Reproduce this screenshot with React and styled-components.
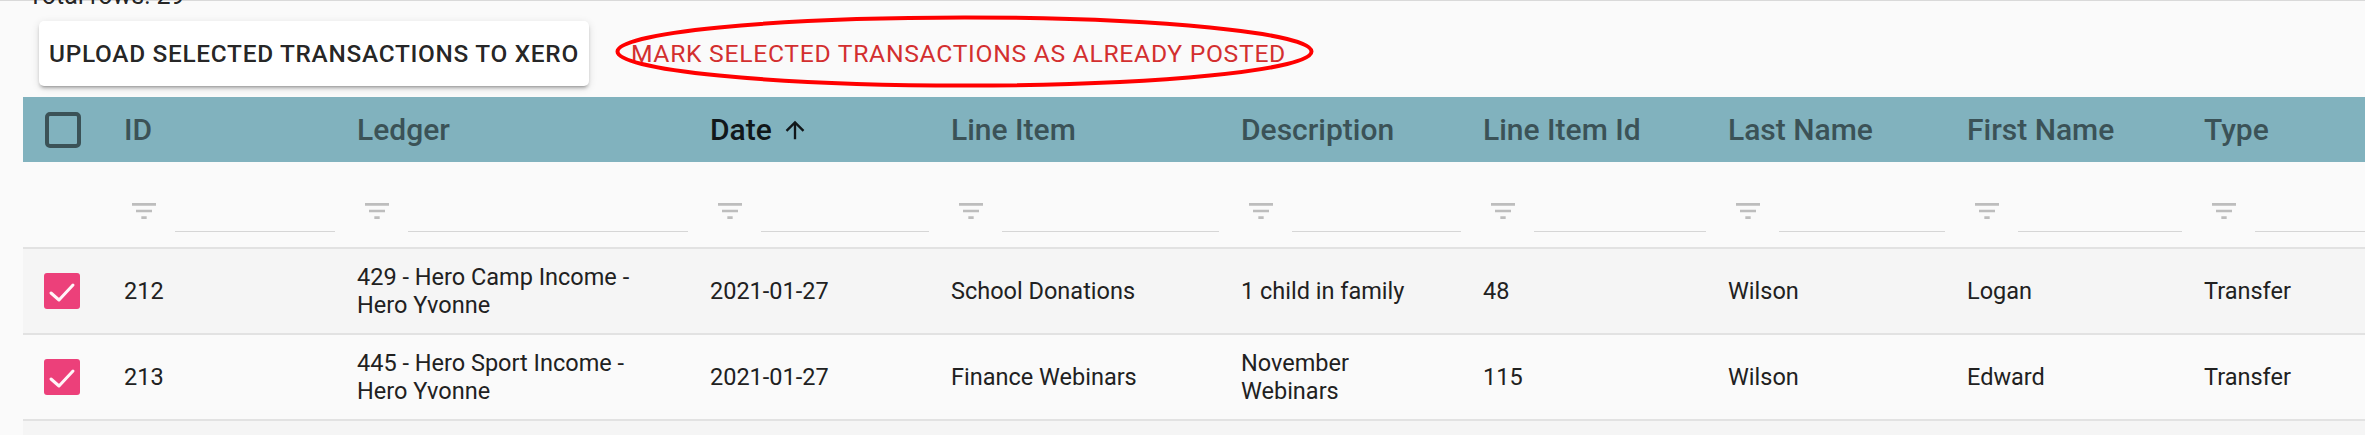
import React from "react";
import styled, { createGlobalStyle } from "styled-components";

const GlobalStyle = createGlobalStyle`
  html, body {
    margin: 0;
    padding: 0;
    overflow: hidden;
    background: #fafafa;
    font-family: Roboto, "Liberation Sans", sans-serif;
  }
`;

const columns = [
  { key: "id", title: "ID", width: 233 },
  { key: "ledger", title: "Ledger", width: 353 },
  { key: "date", title: "Date", width: 241, sorted: true },
  { key: "lineItem", title: "Line Item", width: 290 },
  { key: "description", title: "Description", width: 242 },
  { key: "lineItemId", title: "Line Item Id", width: 245 },
  { key: "lastName", title: "Last Name", width: 239 },
  { key: "firstName", title: "First Name", width: 237 },
  { key: "type", title: "Type", width: 260 },
];

const gridTemplate = `90px ${columns.map((c) => `${c.width}px`).join(" ")}`;

const rows = [
  {
    id: 212,
    ledger: "429 - Hero Camp Income - Hero Yvonne",
    date: "2021-01-27",
    lineItem: "School Donations",
    description: "1 child in family",
    lineItemId: 48,
    lastName: "Wilson",
    firstName: "Logan",
    type: "Transfer",
    selected: true,
  },
  {
    id: 213,
    ledger: "445 - Hero Sport Income - Hero Yvonne",
    date: "2021-01-27",
    lineItem: "Finance Webinars",
    description: "November Webinars",
    lineItemId: 115,
    lastName: "Wilson",
    firstName: "Edward",
    type: "Transfer",
    selected: true,
  },
];

function FilterIcon() {
  return (
    <FilterSvg viewBox="0 0 24 24">
      <path d="M10 18h4v-2h-4v2zM3 6v2h18V6H3zm3 7h12v-2H6v2z" />
    </FilterSvg>
  );
}

function SortArrow() {
  return (
    <ArrowSvg viewBox="0 0 24 24">
      <path d="M4 12l1.41 1.41L11 7.83V20h2V7.83l5.58 5.59L20 12l-8-8-8 8z" />
    </ArrowSvg>
  );
}

function Checkbox({ checked }) {
  if (checked) {
    return (
      <CheckSvg viewBox="0 0 36 36">
        <rect x="0" y="0" width="36" height="36" rx="3" fill="#ec407a" />
        <polyline
          points="7,20 15,27 29,12"
          fill="none"
          stroke="#fff5f8"
          strokeWidth="3"
          strokeLinecap="round"
          strokeLinejoin="round"
        />
      </CheckSvg>
    );
  }
  return (
    <CheckSvg viewBox="0 0 36 36">
      <rect x="2" y="2" width="32" height="32" rx="3" fill="none" stroke="#3b5257" strokeWidth="4" />
    </CheckSvg>
  );
}

function App() {
  return (
    <Page>
      <GlobalStyle />
      <TotalRows>Total rows: 29</TotalRows>
      <Toolbar>
        <UploadButton>Upload selected transactions to Xero</UploadButton>
        <MarkButton>
          Mark selected transactions as already posted
          <Circle viewBox="0 0 701 73">
            <ellipse cx="350.5" cy="36.5" rx="347" ry="34" fill="none" stroke="#ff0000" strokeWidth="4" />
          </Circle>
        </MarkButton>
      </Toolbar>

      <Table>
        <HeaderRow>
          <CheckCell $offset={22}>
            <Checkbox />
          </CheckCell>
          {columns.map((c) => (
            <HeaderCell key={c.key} $sorted={c.sorted}>
              {c.title}
              {c.sorted && <SortArrow />}
            </HeaderCell>
          ))}
        </HeaderRow>

        <FilterRow>
          <div />
          {columns.map((c) => (
            <FilterCell key={c.key}>
              <FilterIcon />
              <FilterInput />
            </FilterCell>
          ))}
        </FilterRow>

        {rows.map((r, i) => (
          <DataRow key={r.id} $striped={i % 2 === 0}>
            <CheckCell $offset={21}>
              <Checkbox checked={r.selected} />
            </CheckCell>
            {columns.map((c) => (
              <DataCell key={c.key}>{r[c.key]}</DataCell>
            ))}
          </DataRow>
        ))}
        <EmptyRow />
      </Table>
    </Page>
  );
}

const Page = styled.div`
  border-top: 1px solid #d9d9d9;
  min-height: 100vh;
  box-sizing: border-box;
`;

const TotalRows = styled.div`
  margin: -20px 0 0 28px;
  font-size: 25px;
  line-height: 29px;
  color: rgba(0, 0, 0, 0.87);
`;

const Toolbar = styled.div`
  display: flex;
  align-items: center;
  gap: 32px;
  margin-top: 11px;
  padding-left: 39px;
`;

const BaseButton = styled.div`
  position: relative;
  display: flex;
  align-items: center;
  height: 65px;
  padding: 0 10px;
  box-sizing: border-box;
  font-size: 24.4px;
  font-weight: 500;
  letter-spacing: 0.7px;
  text-transform: uppercase;
  white-space: nowrap;
  border-radius: 5px;
`;

const UploadButton = styled(BaseButton)`
  background: #ffffff;
  color: rgba(0, 0, 0, 0.87);
  box-shadow: 0 4px 2px -3px rgba(0, 0, 0, 0.2), 0 3px 3px 0 rgba(0, 0, 0, 0.14),
    0 2px 8px 0 rgba(0, 0, 0, 0.12);
`;

const MarkButton = styled(BaseButton)`
  color: #d32f2f;
  font-size: 24.7px;
  font-weight: 400;
`;

const Circle = styled.svg`
  position: absolute;
  left: -7px;
  top: -6px;
  width: 701px;
  height: 73px;
  overflow: visible;
  pointer-events: none;
`;

const Table = styled.div`
  margin: 11px 0 0 23px;
  width: max-content;
`;

const Row = styled.div`
  display: grid;
  grid-template-columns: ${gridTemplate};
  box-sizing: border-box;
`;

const HeaderRow = styled(Row)`
  height: 65px;
  background: #81b2be;
`;

const HeaderCell = styled.div`
  display: flex;
  align-items: center;
  padding-left: 11px;
  font-size: 30px;
  font-weight: 500;
  color: ${(p) => (p.$sorted ? "#11171a" : "#3b5257")};
  white-space: nowrap;
`;

const ArrowSvg = styled.svg`
  width: 28px;
  height: 28px;
  margin-left: 9px;
  fill: #11171a;
`;

const CheckCell = styled.div`
  display: flex;
  align-items: center;
  padding-left: ${(p) => p.$offset}px;
`;

const CheckSvg = styled.svg`
  width: 36px;
  height: 36px;
  display: block;
`;

const FilterRow = styled(Row)`
  height: 87px;
  border-bottom: 2px solid #e2e2e2;
`;

const FilterCell = styled.div`
  display: flex;
  align-items: flex-start;
  padding: 33px 11px 0 15px;
`;

const FilterSvg = styled.svg`
  width: 32px;
  height: 32px;
  flex: none;
  fill: #bdbdbd;
`;

const FilterInput = styled.div`
  flex: 1;
  height: 36px;
  margin-left: 15px;
  border-bottom: 1px solid #d6d6d6;
`;

const DataRow = styled(Row)`
  height: 86px;
  background: ${(p) => (p.$striped ? "#f5f5f5" : "#fafafa")};
  border-bottom: 2px solid #e2e2e2;
`;

const EmptyRow = styled.div`
  height: 40px;
  background: #f5f5f5;
`;

const DataCell = styled.div`
  display: flex;
  align-items: center;
  padding: 0 36px 0 11px;
  font-size: 23.5px;
  line-height: 28px;
  color: #212121;
`;

export default App;
